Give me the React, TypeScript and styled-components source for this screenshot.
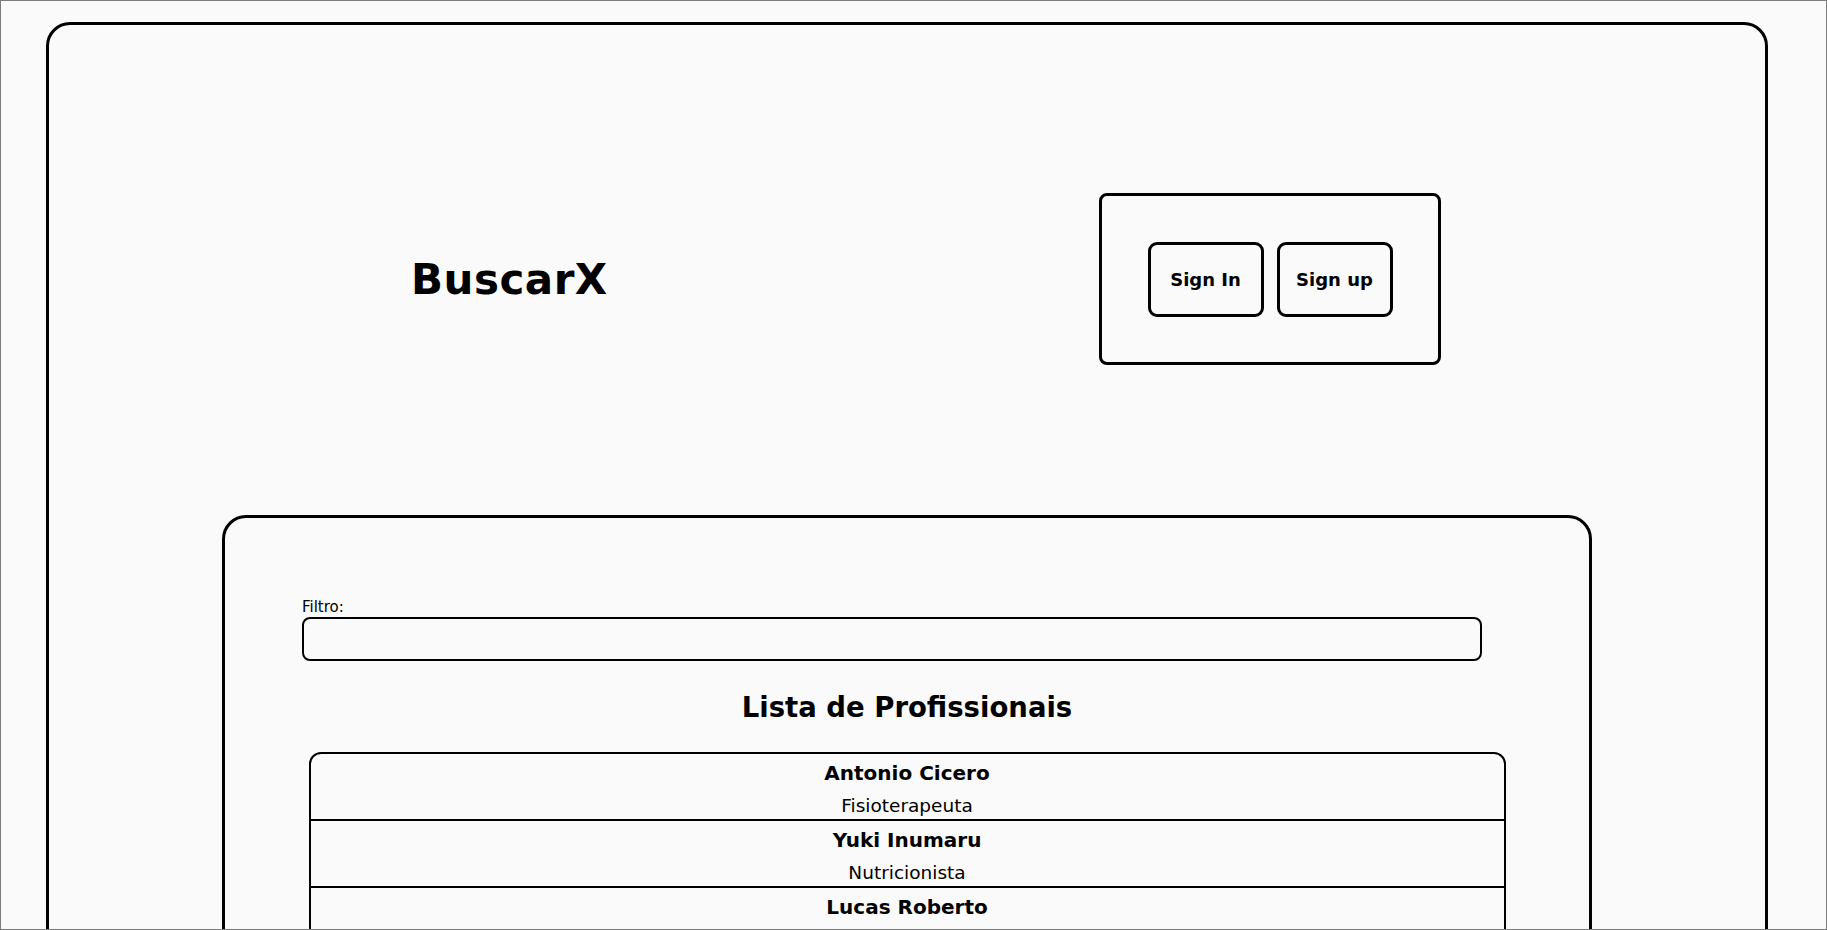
import styled, { createGlobalStyle } from 'styled-components'

const GlobalStyle = createGlobalStyle`
  html, body {
    margin: 0;
    padding: 0;
    background: #fafafa;
  }
  * {
    box-sizing: border-box;
  }
  body {
    font-family: "Comic Sans MS", "DejaVu Sans", sans-serif;
    color: #000;
  }
`

const Frame = styled.div`
  height: 100vh;
  border: 1px solid #7c7c7c;
  overflow: hidden;
  padding: 21px 58px 0 45px;
`

const Page = styled.div`
  border: 3px solid #000;
  border-radius: 24px;
  min-height: 1200px;
`

const Header = styled.header`
  display: grid;
  grid-template-columns: 688px 342px;
  align-items: center;
  padding: 168px 0 150px 362px;
`

const Logo = styled.h1`
  margin: 0;
  font-size: 42px;
  font-weight: 700;
  letter-spacing: 0.5px;
`

const AuthBox = styled.div`
  display: flex;
  justify-content: center;
  align-items: center;
  gap: 13px;
  height: 172px;
  border: 3px solid #000;
  border-radius: 8px;
`

const AuthButton = styled.button`
  width: 116px;
  height: 75px;
  background: transparent;
  border: 3px solid #000;
  border-radius: 9px;
  font-family: inherit;
  font-size: 18px;
  font-weight: 700;
  color: #000;
  cursor: pointer;
`

const SearchCard = styled.section`
  margin: 0 173px;
  border: 3px solid #000;
  border-radius: 24px;
  padding: 79px 0 0;
  min-height: 600px;
`

const FilterBlock = styled.div`
  display: flex;
  flex-direction: column;
  padding: 0 107px 0 77px;
`

const Label = styled.label`
  font-size: 15px;
  line-height: 20px;
`

const FilterInput = styled.input`
  height: 44px;
  border: 2px solid #000;
  border-radius: 8px;
  background: transparent;
  font-family: inherit;
  font-size: 16px;
  padding: 0 12px;
`

const Title = styled.h2`
  margin: 22px 0 0;
  text-align: center;
  font-size: 27.5px;
  line-height: 48px;
  font-weight: 700;
`

const List = styled.ul`
  list-style: none;
  margin: 21px auto 0;
  padding: 0;
  width: 1197px;
  border: 2px solid #000;
  border-radius: 12px;
`

const Row = styled.li`
  height: 67px;
  display: flex;
  flex-direction: column;
  align-items: center;
  border-bottom: 2px solid #000;
  padding-top: 5px;
`

const Name = styled.span`
  font-size: 20px;
  line-height: 28px;
  font-weight: 700;
`

const Role = styled.span`
  margin-top: 7px;
  font-size: 18.5px;
  line-height: 24px;
`

const professionals = [
  { name: 'Antonio Cicero', role: 'Fisioterapeuta' },
  { name: 'Yuki Inumaru', role: 'Nutricionista' },
  { name: 'Lucas Roberto', role: '' },
]

function App() {
  return (
    <>
      <GlobalStyle />
      <Frame>
        <Page>
          <Header>
            <Logo>BuscarX</Logo>
            <AuthBox>
              <AuthButton>Sign In</AuthButton>
              <AuthButton>Sign up</AuthButton>
            </AuthBox>
          </Header>

          <SearchCard>
            <FilterBlock>
              <Label htmlFor="filtro">Filtro:</Label>
              <FilterInput id="filtro" type="text" />
            </FilterBlock>
            <Title>Lista de Profissionais</Title>
            <List>
              {professionals.map((p) => (
                <Row key={p.name}>
                  <Name>{p.name}</Name>
                  {p.role && <Role>{p.role}</Role>}
                </Row>
              ))}
            </List>
          </SearchCard>
        </Page>
      </Frame>
    </>
  )
}

export default App
